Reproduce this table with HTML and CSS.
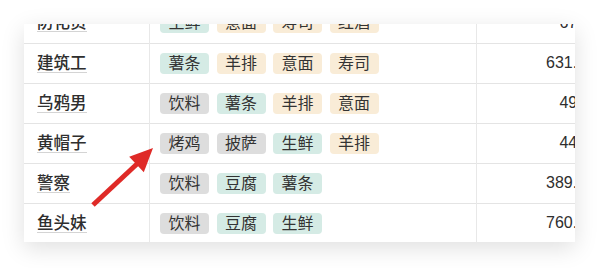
FILE: index.html
```html
<!DOCTYPE html>
<html lang="zh-CN">
<head>
    <meta charset="UTF-8">
    <meta name="viewport" content="width=device-width, initial-scale=1.0">
    <title>点单表</title>
    <link rel="stylesheet" href="styles.css">
</head>
<body>
    <div class="frame">
        <div class="card">
            <table class="orders">
                <tr>
                    <td class="name"><span>防化员</span></td>
                    <td class="tags">
                        <div class="tag-list">
                            <span class="tag green">生鲜</span>
                            <span class="tag beige">意面</span>
                            <span class="tag beige">寿司</span>
                            <span class="tag beige">红酒</span>
                        </div>
                    </td>
                    <td class="amount">6712</td>
                </tr>
                <tr>
                    <td class="name"><span>建筑工</span></td>
                    <td class="tags">
                        <div class="tag-list">
                            <span class="tag green">薯条</span>
                            <span class="tag beige">羊排</span>
                            <span class="tag beige">意面</span>
                            <span class="tag beige">寿司</span>
                        </div>
                    </td>
                    <td class="amount">631.50</td>
                </tr>
                <tr>
                    <td class="name"><span>乌鸦男</span></td>
                    <td class="tags">
                        <div class="tag-list">
                            <span class="tag gray">饮料</span>
                            <span class="tag green">薯条</span>
                            <span class="tag beige">羊排</span>
                            <span class="tag beige">意面</span>
                        </div>
                    </td>
                    <td class="amount">4936</td>
                </tr>
                <tr>
                    <td class="name"><span>黄帽子</span></td>
                    <td class="tags">
                        <div class="tag-list">
                            <span class="tag gray">烤鸡</span>
                            <span class="tag gray">披萨</span>
                            <span class="tag green">生鲜</span>
                            <span class="tag beige">羊排</span>
                        </div>
                    </td>
                    <td class="amount">4478</td>
                </tr>
                <tr>
                    <td class="name"><span>警察</span></td>
                    <td class="tags">
                        <div class="tag-list">
                            <span class="tag gray">饮料</span>
                            <span class="tag green">豆腐</span>
                            <span class="tag green">薯条</span>
                        </div>
                    </td>
                    <td class="amount">389.20</td>
                </tr>
                <tr>
                    <td class="name"><span>鱼头妹</span></td>
                    <td class="tags">
                        <div class="tag-list">
                            <span class="tag gray">饮料</span>
                            <span class="tag green">豆腐</span>
                            <span class="tag green">生鲜</span>
                        </div>
                    </td>
                    <td class="amount">760.90</td>
                </tr>
            </table>
        </div>

        <!-- pointer arrow drawn over the table -->
        <svg class="arrow" width="600" height="268" viewBox="0 0 600 268">
            <line x1="93" y1="205" x2="138" y2="163" stroke="#df2a27" stroke-width="5"/>
            <polygon points="153,148 129.2,156.8 143.8,172.2" fill="#df2a27"/>
        </svg>
    </div>
</body>
</html>
```

FILE: styles.css
```css
body {
    margin: 0;
    background: #fff;
    font-family: "Liberation Sans", "Noto Sans CJK SC", sans-serif;
    color: #2e2e2e;
}

.frame {
    position: relative;
    width: 600px;
    height: 268px;
    padding: 24px 0 0 24px;
    box-sizing: border-box;
}

.card {
    width: 551px;
    height: 218px;
    overflow: hidden;
    background: #fff;
    box-shadow: 0 6px 22px rgba(0, 0, 0, 0.13);
}

.orders {
    width: 587px;
    margin-top: -21px;
    border-collapse: collapse;
    table-layout: fixed;
}

.orders tr {
    height: 40px;
    border-bottom: 1px solid #e4e4e4;
}

.orders td {
    padding: 0;
    vertical-align: middle;
}

.name {
    width: 112px;
    padding-left: 13px !important;
    border-right: 1px solid #e8e8e8;
    font-size: 16.5px;
    font-weight: 500;
}

.name span {
    display: inline-block;
    line-height: 18px;
    border-bottom: 1px solid #d4d4d4;
}

.tags {
    width: 316px;
    padding-left: 10px !important;
    border-right: 1px solid #e8e8e8;
}

.tag-list {
    display: flex;
    gap: 7.5px;
}

.tag {
    display: inline-block;
    padding: 0 8.5px;
    line-height: 21px;
    border-radius: 4px;
    font-size: 16px;
    color: #333;
}

.tag.green {
    background: #d5ebe5;
}

.tag.beige {
    background: #f9ecd7;
}

.tag.gray {
    background: #dddddd;
}

.amount {
    padding-right: 16px !important;
    text-align: right;
    font-size: 16px;
    white-space: nowrap;
}

.arrow {
    position: absolute;
    top: 0;
    left: 0;
    pointer-events: none;
}
```
